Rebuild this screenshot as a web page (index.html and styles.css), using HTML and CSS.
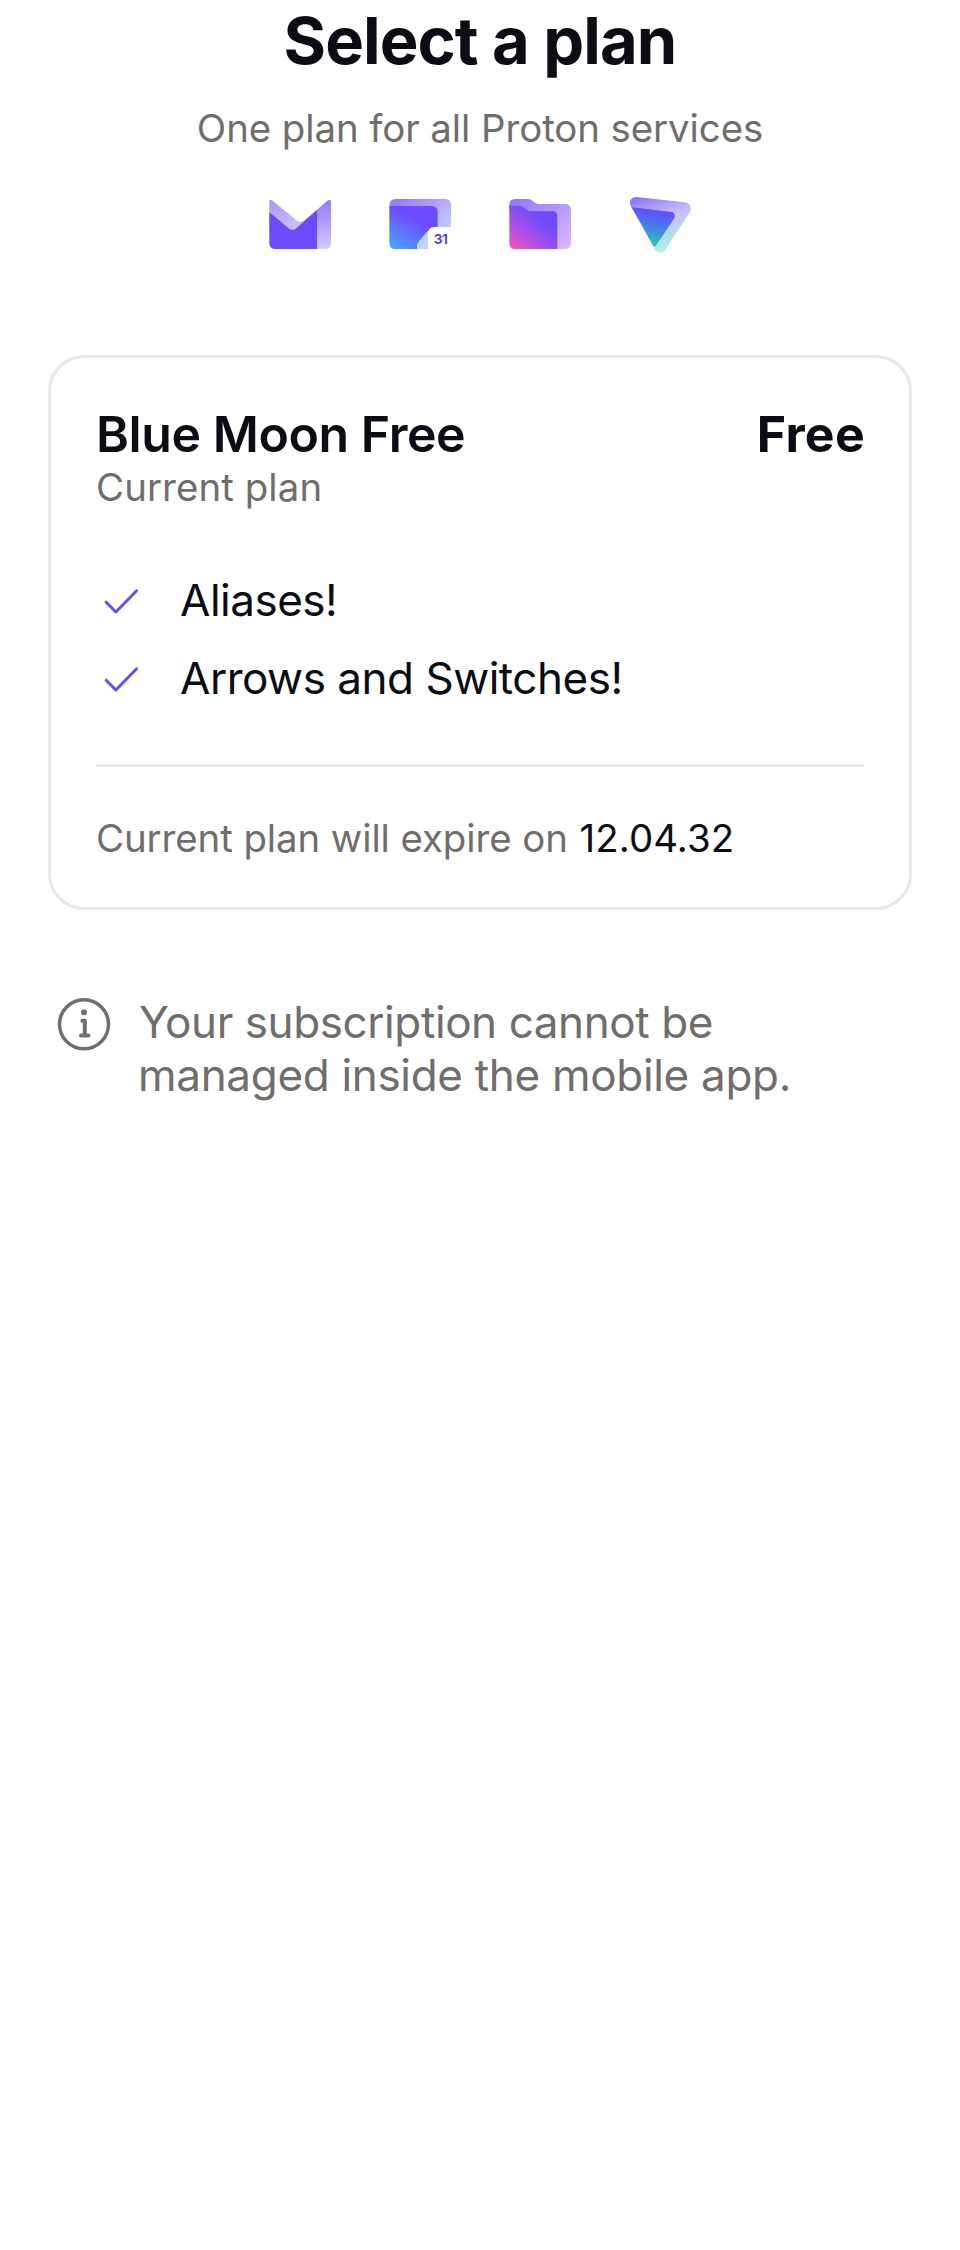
FILE: index.html
```html
<!DOCTYPE html>
<html lang="en">
<head>
<meta charset="utf-8">
<title>Select a plan</title>
<link rel="stylesheet" href="styles.css">
</head>
<body>
<main class="page">
  <header class="intro">
    <h1 class="title">Select a plan</h1>
    <p class="subtitle">One plan for all Proton services</p>
    <div class="services">
      <!-- Mail -->
      <svg class="service" viewBox="0 0 240 225" aria-hidden="true">
        <defs>
          <linearGradient id="mail" x1="0" y1="0" x2=".25" y2="1">
            <stop offset="0" stop-color="#a894ff"/><stop offset=".3" stop-color="#b9a3ff"/><stop offset="1" stop-color="#d9ccff"/>
          </linearGradient>
          <linearGradient id="mailSide" x1="0" y1="0" x2="0" y2="1">
            <stop offset="0" stop-color="#957dff"/><stop offset=".4" stop-color="#ab97ff"/><stop offset="1" stop-color="#d6c8ff"/>
          </linearGradient>
        </defs>
        <path fill="url(#mail)" d="M28 50q0-9 8-4l75 61q10 8 20 0L160 84V174H28z" />
        <path fill="url(#mailSide)" d="M171 74l33-28q9-5 9 4V174q0 18-18 18H165z"/>
        <path fill="#6d4aff" d="M28 82l60 49q10 7 19 0l64-57V192H47q-19 0-19-18z"/>
      </svg>
      <!-- Calendar -->
      <svg class="service" viewBox="0 0 240 225" aria-hidden="true">
        <defs>
          <linearGradient id="calBack" x1="0" y1="0" x2="1" y2="1">
            <stop offset=".1" stop-color="#957dff"/><stop offset=".45" stop-color="#b9a4fb"/><stop offset="1" stop-color="#bfe8ff"/>
          </linearGradient>
          <linearGradient id="calFront" x1=".65" y1="0" x2="0" y2="1">
            <stop offset=".25" stop-color="#6d4aff"/><stop offset="1" stop-color="#48a8ff"/>
          </linearGradient>
        </defs>
        <path fill="url(#calBack)" d="M47 42H195q18 0 18 18v66H165L111 180H60L28 64Q28 42 47 42z"/>
        <path fill="url(#calFront)" d="M28 63H155q18 0 18 18v45h-18l-44 54v12H46q-18 0-18-18z"/>
        <path fill="#bfd7ff" d="M111 192v-7q0-10 7-18l27-31v56z"/>
        <path fill="#fff" d="M144 195v-48q0-21 21-21h51v69z"/>
        <text class="day" x="182" y="178" text-anchor="middle">31</text>
      </svg>
      <!-- Drive -->
      <svg class="service" viewBox="0 0 240 225" aria-hidden="true">
        <defs>
          <linearGradient id="driveBack" x1="0" y1="0" x2="1" y2="1">
            <stop offset="0" stop-color="#8f75ff"/><stop offset=".4" stop-color="#ae91ff"/><stop offset="1" stop-color="#dcbcff"/>
          </linearGradient>
          <linearGradient id="driveFront" x1=".75" y1=".2" x2=".05" y2="1">
            <stop offset=".1" stop-color="#6d4aff"/><stop offset=".55" stop-color="#a650e8"/><stop offset="1" stop-color="#f853b4"/>
          </linearGradient>
        </defs>
        <path fill="url(#driveBack)" d="M45 42H81q8 0 14 4l11 8q5 3 12 3h77q18 0 18 18v99q0 18-18 18H80L28 70V60q0-18 17-18z"/>
        <path fill="url(#driveFront)" d="M28 62H56q7 0 13 4l11 9q5 4 12 4h64q16 0 16 16v97H46q-18 0-18-18z"/>
      </svg>
      <!-- VPN -->
      <svg class="service" viewBox="0 0 240 225" aria-hidden="true">
        <defs>
          <linearGradient id="vpnBack" x1=".25" y1="0" x2=".6" y2="1">
            <stop offset="0" stop-color="#9378f8"/><stop offset=".4" stop-color="#c9bcf8"/><stop offset="1" stop-color="#a5f5dc"/>
          </linearGradient>
          <linearGradient id="vpnFront" x1=".65" y1="0" x2=".45" y2="1">
            <stop offset="0" stop-color="#6249fa"/><stop offset=".4" stop-color="#4e6fee"/><stop offset="1" stop-color="#20cdb5"/>
          </linearGradient>
        </defs>
        <path fill="url(#vpnBack)" d="M50 36L194 52c16 2 23 16 15 30L136 194c-8 12-25 11-32-2L33 64C25 49 33 35 50 36z"/>
        <path fill="url(#vpnFront)" d="M35 67L151 80c12 1 17 11 10 22L109 181c-3 4-7 4-10 0z"/>
      </svg>
    </div>
  </header>

  <section class="card">
    <div class="card-head">
      <h2 class="plan">Blue Moon Free</h2>
      <span class="price">Free</span>
    </div>
    <p class="status">Current plan</p>
    <ul class="features">
      <li class="feature">
        <svg class="check" viewBox="0 0 48 54" aria-hidden="true"><path d="M10.2 30.2l9.7 9.8L40.6 18.8"/></svg>
        <span class="label">Aliases!</span>
      </li>
      <li class="feature">
        <svg class="check" viewBox="0 0 48 54" aria-hidden="true"><path d="M10.2 30.2l9.7 9.8L40.6 18.8"/></svg>
        <span class="label">Arrows and Switches!</span>
      </li>
    </ul>
    <p class="expiry">Current plan will expire on <span class="date">12.04.32</span></p>
  </section>

  <div class="note">
    <svg class="info" viewBox="0 0 60 60" aria-hidden="true">
      <circle class="info-ring" cx="30" cy="30.3" r="24.5"/>
      <circle class="info-dot" cx="30" cy="18.2" r="3"/>
      <path class="info-stem" d="M28.4 26.8h2.4v14.8M27 41.6h7.4"/>
    </svg>
    <p class="note-text"><span class="line first">Your subscription cannot be</span> <span class="line">managed inside the mobile app.</span></p>
  </div>
</main>
</body>
</html>
```
FILE: styles.css
```css
* { box-sizing: border-box; }
body { margin: 0; background: #fff; color: #0c0c14; font-family: Inter, "Liberation Sans", sans-serif; }
h1, h2, p, ul { margin: 0; padding: 0; font-weight: 400; }
svg { display: block; flex: none; }

.page { min-height: 2250px; padding: 8px 48px 0; }

.intro { display: flex; flex-direction: column; align-items: center; }
.title { font-size: 65px; line-height: 66px; font-weight: 700; letter-spacing: -0.94px; }
.subtitle { margin-top: 31px; font-size: 38.4px; line-height: 46px; letter-spacing: -0.07px; color: #706d6b; }
.services { display: flex; gap: 40px; margin-top: 34px; }
.service { width: 80px; height: 75px; }
.day { font-size: 41px; font-weight: 700; letter-spacing: -1px; fill: #6243e6; }

.card { margin-top: 95px; padding: 46px 45px; border: 3px solid #eae7e4; border-radius: 36px; }
.card-head { display: flex; justify-content: space-between; line-height: 60px; font-size: 50px; }
.plan { font-size: inherit; font-weight: 600; letter-spacing: -0.42px; }
.price { margin-right: -1px; font-weight: 700; letter-spacing: 0.3px; }
.status { font-size: 38.4px; line-height: 46px; letter-spacing: 0.09px; color: #706d6b; }
.features { display: grid; gap: 24px; margin-top: 62px; list-style: none; }
.feature { display: flex; gap: 36px; font-size: 44px; line-height: 54px; letter-spacing: -0.48px; }
.label { padding-top: 1px; margin-bottom: -1px; }
.check { width: 48px; height: 54px; fill: none; stroke: #6d4aff; stroke-width: 3; stroke-linecap: round; stroke-linejoin: round; }
.expiry { margin-top: 60px; padding-top: 48px; border-top: 3px solid #eae7e4; font-size: 38.4px; line-height: 46px; letter-spacing: -0.08px; color: #706d6b; }
.date { margin-left: 1px; letter-spacing: 0.1px; color: #0c0c14; }

.note { display: flex; gap: 24px; margin-top: 84px; padding-left: 6px; color: #706d6b; }
.info { width: 60px; height: 60px; }
.info-ring, .info-stem { fill: none; stroke: #706d6b; stroke-width: 3.5; stroke-linecap: round; stroke-linejoin: round; }
.info-stem { stroke-width: 4; }
.info-dot { fill: #706d6b; }
.note-text { padding-top: 2px; font-size: 44px; line-height: 53px; }
.line { display: block; letter-spacing: -0.31px; }
.line.first { padding-left: 1px; letter-spacing: -0.41px; }
```
